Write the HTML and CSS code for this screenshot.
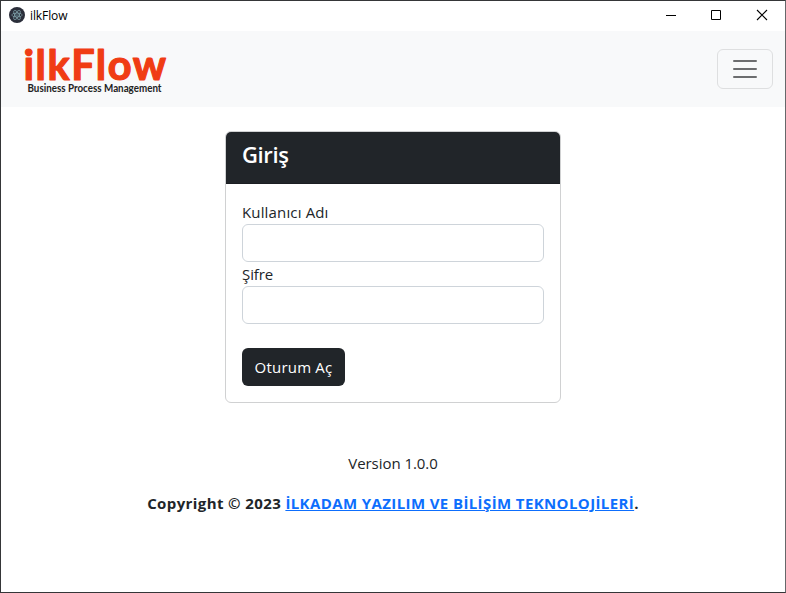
FILE: index.html
```html
<!DOCTYPE html>
<html lang="tr">
<head>
<meta charset="utf-8">
<title>ilkFlow</title>
<link rel="stylesheet" href="styles.css">
</head>
<body>
<div class="window">
  <header class="titlebar">
    <svg class="app-icon" width="16" height="16" viewBox="0 0 16 16" fill="none">
      <circle cx="8" cy="8" r="8" fill="#2b2e3a"/>
      <g stroke="#8fb5bd" stroke-width=".6">
        <ellipse cx="8" cy="8" rx="5.300" ry="2"/>
        <ellipse cx="8" cy="8" rx="5.300" ry="2" transform="rotate(60 8 8)"/>
        <ellipse cx="8" cy="8" rx="5.300" ry="2" transform="rotate(120 8 8)"/>
      </g>
      <circle cx="8" cy="8" r=".6" fill="#9feaf9"/>
    </svg>
    <span class="app-name">ilkFlow</span>
    <div class="controls">
      <svg width="46" height="30" viewBox="0 0 46 30"><path d="M18 14.500h10" stroke="#000"/></svg>
      <svg width="46" height="30" viewBox="0 0 46 30"><path d="M17.500 9.500h9v9h-9z" fill="none" stroke="#000"/></svg>
      <svg width="46" height="30" viewBox="0 0 46 30"><path d="M17 9l10 10M27 9l-10 10" stroke="#000" stroke-width="1.100"/></svg>
    </div>
  </header>
  <nav class="navbar">
    <svg class="logo" width="144" height="60" viewBox="0 -4 144 60">
      <text class="logo-name" x="-0.500" y="36.500" textLength="142.500" lengthAdjust="spacing">ilkFlow</text>
      <text class="logo-tag" x="3.500" y="49" textLength="134" lengthAdjust="spacingAndGlyphs">Business Process Management</text>
    </svg>
    <button class="toggler" type="button" aria-label="Menü">
      <svg width="30" height="30" viewBox="0 0 30 30"><path d="M4 7h22M4 15h22M4 23h22" stroke="#6c6d6f" stroke-width="2" stroke-linecap="round" stroke-miterlimit="10"/></svg>
    </button>
  </nav>
  <main class="content">
    <form class="card">
      <h1 class="card-header"><span class="card-title">Giriş</span></h1>
      <div class="card-body">
        <label class="label-user" for="user">Kullanıcı Adı</label>
        <input id="user" type="text">
        <label for="pass">Şifre</label>
        <input id="pass" type="password">
        <button class="submit" type="button">Oturum Aç</button>
      </div>
    </form>
    <p class="version">Version 1.0.0</p>
    <p class="copyright">Copyright © 2023 <a href="#">İLKADAM YAZILIM VE BİLİŞİM TEKNOLOJİLERİ</a>.</p>
  </main>
</div>
</body>
</html>
```
FILE: styles.css
```css
* { box-sizing: border-box; }
body {
  margin: 0;
  font: 400 16px/24px "Open Sans", "Noto Sans", sans-serif;
  color: #212529;
  background: #fff;
}
.window {
  height: 593px;
  border: 1px solid #353638;
  border-right-color: #66686a;
  overflow: hidden;
}
.titlebar {
  display: flex;
  align-items: center;
  height: 30px;
  padding-left: 8px;
  color: #000;
}
.app-icon { margin-top: -2px; }
.app-name {
  margin-left: 5px;
  font-size: 12px;
  letter-spacing: -0.1px;
}
.controls { display: flex; margin: 0 -1px 0 auto; }
.controls svg { display: block; }
.navbar {
  display: flex;
  align-items: center;
  justify-content: space-between;
  height: 76px;
  padding: 0 12px 0 23px;
  background: #f8f9fa;
}
.logo { display: block; overflow: visible; }
.logo-name {
  font: 700 41.500px Lato, sans-serif;
  fill: #f03c14;
  stroke: #f03c14;
  stroke-width: 1.200px;
  stroke-linejoin: round;
}
.logo-tag {
  font: 700 10.500px Lato, sans-serif;
  fill: #222;
}
.toggler {
  display: flex;
  align-items: center;
  justify-content: center;
  width: 56px;
  height: 40px;
  padding: 0;
  border: 1px solid #dedfe0;
  border-radius: 6px;
  background: transparent;
}
.content {
  display: flex;
  flex-direction: column;
  align-items: center;
  padding-top: 24px;
}
.card {
  width: 336px;
  height: 272px;
  border: 1px solid #d0d1d2;
  border-radius: 6px;
  overflow: hidden;
}
.card-header {
  height: 52px;
  margin: 0;
  padding: 8px 16px;
  border-bottom: 1px solid #1b1e22;
  background: #212529;
  color: #fff;
  font-size: 22px;
  font-weight: 600;
  line-height: 29px;
}
.card-title { letter-spacing: -0.4px; }
.card-body {
  display: flex;
  flex-direction: column;
  padding: 16px;
}
label { font-size: 15px; letter-spacing: -0.1px; }
.label-user { letter-spacing: 0.15px; }
input {
  width: 100%;
  height: 38px;
  padding: 6px 12px;
  border: 1px solid #ced4da;
  border-radius: 6px;
  background: #fff;
  font: inherit;
}
.submit {
  align-self: flex-start;
  width: 103px;
  height: 38px;
  margin-top: 24px;
  padding: 0 0 1px;
  border: 0;
  border-radius: 6px;
  background: #212529;
  color: #fff;
  font: inherit;
  font-size: 15px;
  letter-spacing: 0.2px;
  white-space: nowrap;
}
.version {
  margin: 48px 0 16px;
  font-size: 15px;
  letter-spacing: -0.05px;
}
.copyright {
  margin: 0;
  font-size: 15px;
  font-weight: 700;
  letter-spacing: 0.39px;
  white-space: nowrap;
}
.copyright a {
  color: #0d6efd;
  text-decoration: underline;
}
```
